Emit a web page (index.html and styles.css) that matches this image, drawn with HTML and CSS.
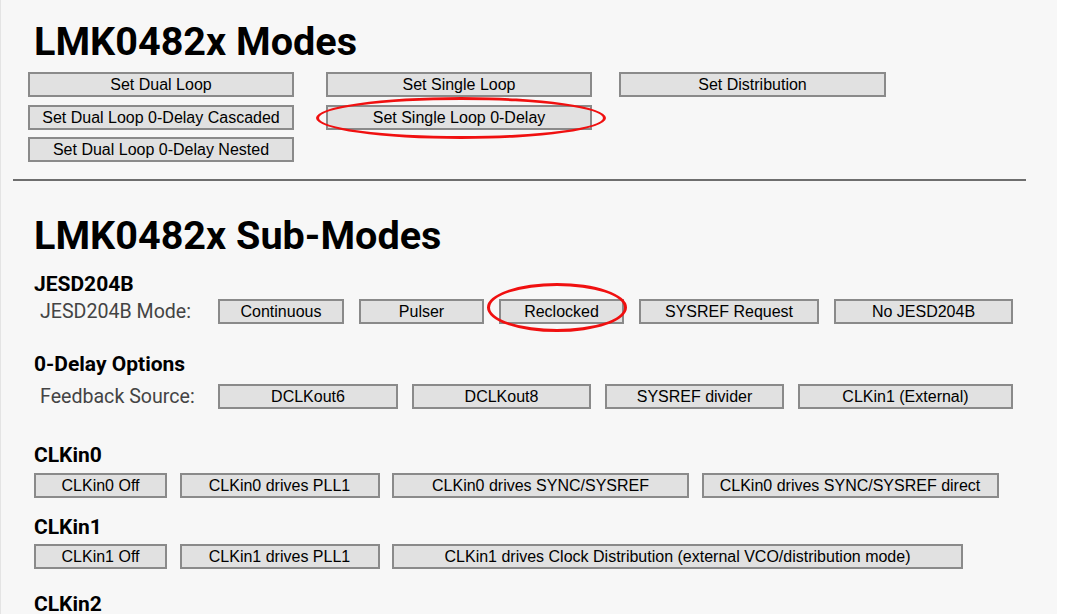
FILE: index.html
```html
<!DOCTYPE html>
<html>
<head>
<meta charset="utf-8">
<title>LMK0482x Modes</title>
<link rel="stylesheet" href="styles.css">
</head>
<body>
<div class="page">
  <section class="modes">
    <h1 class="title">LMK0482x Modes</h1>
    <div class="mode-grid">
      <button class="btn">Set Dual Loop</button>
      <button class="btn">Set Single Loop</button>
      <button class="btn">Set Distribution</button>
      <button class="btn">Set Dual Loop 0-Delay Cascaded</button>
      <button class="btn marked">Set Single Loop 0-Delay<span class="ring ring-a"></span></button>
      <span></span>
      <button class="btn">Set Dual Loop 0-Delay Nested</button>
    </div>
  </section>
  <hr class="rule">
  <section class="submodes">
    <h1 class="title sub-title">LMK0482x Sub-Modes</h1>

    <h2 class="group jesd-head">JESD204B</h2>
    <div class="row labeled jesd-row">
      <span class="label">JESD204B Mode:</span>
      <button class="btn w126">Continuous</button>
      <button class="btn w125">Pulser</button>
      <button class="btn w125 marked">Reclocked<span class="ring ring-b"></span></button>
      <button class="btn w180">SYSREF Request</button>
      <button class="btn w179">No JESD204B</button>
    </div>

    <h2 class="group delay-head">0-Delay Options</h2>
    <div class="row labeled fb-row">
      <span class="label">Feedback Source:</span>
      <button class="btn w180">DCLKout6</button>
      <button class="btn w179">DCLKout8</button>
      <button class="btn w179">SYSREF divider</button>
      <button class="btn w215">CLKin1 (External)</button>
    </div>

    <h2 class="group clk0-head">CLKin0</h2>
    <div class="row clk-row">
      <button class="btn w133">CLKin0 Off</button>
      <button class="btn w200">CLKin0 drives PLL1</button>
      <button class="btn w297">CLKin0 drives SYNC/SYSREF</button>
      <button class="btn w297">CLKin0 drives SYNC/SYSREF direct</button>
    </div>

    <h2 class="group clk1-head">CLKin1</h2>
    <div class="row clk-row">
      <button class="btn w133">CLKin1 Off</button>
      <button class="btn w200">CLKin1 drives PLL1</button>
      <button class="btn w571">CLKin1 drives Clock Distribution (external VCO/distribution mode)</button>
    </div>

    <h2 class="group clk2-head">CLKin2</h2>
  </section>
</div>
</body>
</html>
```

FILE: styles.css
```css
html, body {
  margin: 0;
  padding: 0;
  background: #ffffff;
  overflow: hidden;
}

.page {
  width: 1057px;
  height: 614px;
  background: #f7f7f7;
  border-left: 1px solid #e4e4e4;
  padding-top: 22px;
  box-sizing: border-box;
  overflow: hidden;
}

.title {
  margin: 0 0 0 33px;
  font-family: Roboto, "Liberation Sans", sans-serif;
  font-weight: 700;
  font-size: 39.6px;
  line-height: 39px;
  color: #000000;
}

.mode-grid {
  margin: 11px 0 0 27px;
  display: grid;
  grid-template-columns: 298px 293px 267px;
  grid-auto-rows: 25px;
  row-gap: 7.5px;
}

.btn {
  position: relative;
  box-sizing: border-box;
  height: 25px;
  width: 266px;
  margin: 0;
  padding: 0;
  background: #e1e1e1;
  border: 2px solid #8a8a8a;
  border-radius: 0;
  font-family: "Liberation Sans", Arial, sans-serif;
  font-size: 16px;
  line-height: 21px;
  color: #000000;
  text-align: center;
  white-space: nowrap;
}

.mode-grid .btn:nth-child(3) { width: 267px; }

.ring {
  position: absolute;
  border: 3.5px solid #f01010;
  border-radius: 50%;
  pointer-events: none;
}
.ring-a { left: -12px; right: -16px; top: -10px; bottom: -11px; }
.ring-b { left: -14px; right: -5px; top: -18px; bottom: -10px; }

.rule {
  margin: 17px 0 0 12px;
  width: 1013px;
  height: 0;
  border: 0;
  border-top: 2px solid #6e6e6e;
}

.sub-title { margin-top: 35px; }

.group {
  margin: 0 0 0 33px;
  font-family: Roboto, "Liberation Sans", sans-serif;
  font-weight: 700;
  font-size: 21px;
  line-height: 21px;
  color: #000000;
}

.jesd-head { margin-top: 19px; }
.delay-head { margin-top: 30px; }
.clk0-head { margin-top: 36px; }
.clk1-head { margin-top: 19px; }
.clk2-head { margin-top: 25px; }

.row {
  display: flex;
  align-items: center;
  margin-left: 33px;
}

.labeled .label {
  padding-left: 6px;
  box-sizing: border-box;
  font-family: Roboto, "Liberation Sans", sans-serif;
  font-size: 19.6px;
  color: #444444;
  white-space: nowrap;
}

.jesd-row { margin-top: 4px; gap: 15px; }
.jesd-row .label { width: 169px; }
.fb-row { margin-top: 9px; gap: 14px; }
.fb-row .label { width: 170px; }
.clk-row { margin-top: 6.5px; gap: 12.5px; }

.w125 { width: 125px; }
.w126 { width: 126px; }
.w133 { width: 133px; }
.w179 { width: 179px; }
.w180 { width: 180px; }
.w200 { width: 200px; }
.w215 { width: 215px; }
.w297 { width: 297px; }
.w571 { width: 571px; }
```
